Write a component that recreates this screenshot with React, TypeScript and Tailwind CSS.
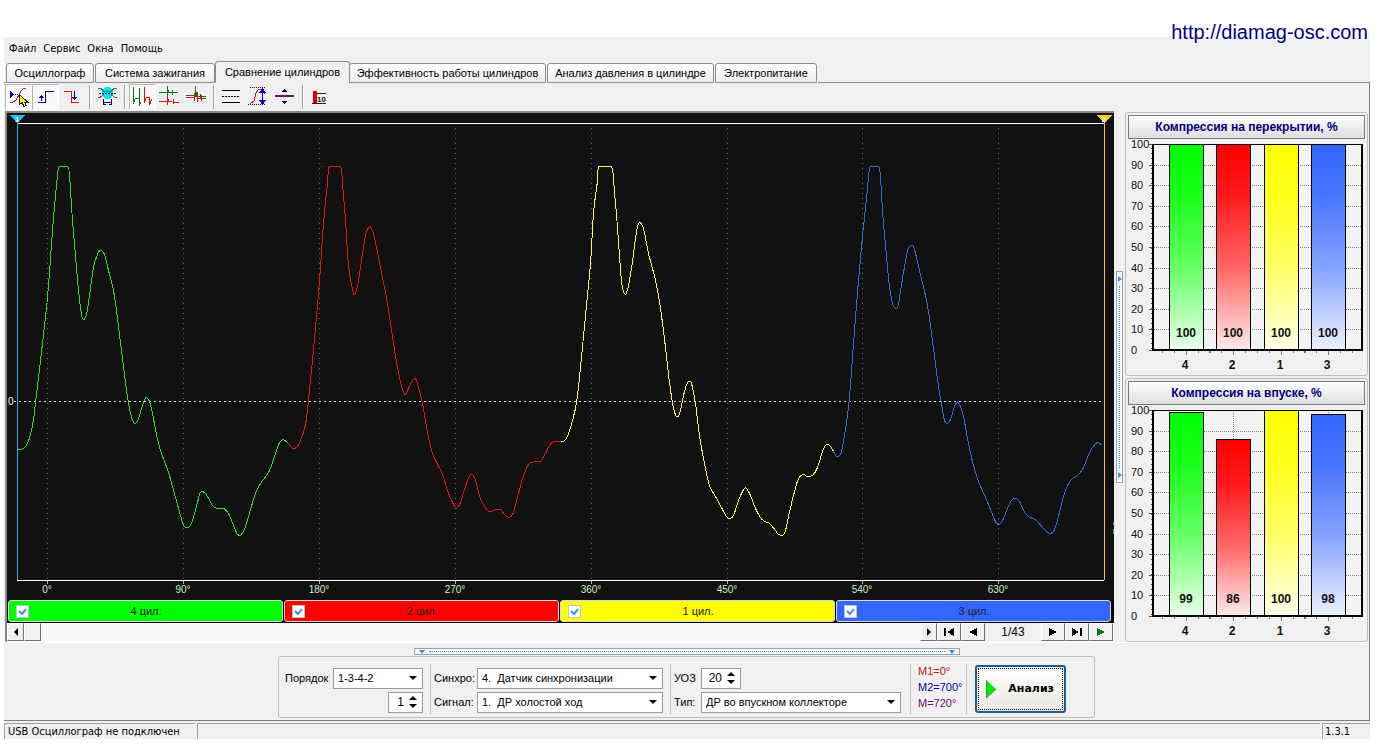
import { useState } from 'react'
import type { ReactNode } from 'react'

type Point = [number, number]

const MENU = ['Файл', 'Сервис', 'Окна', 'Помощь']

const TABS = [
  { label: 'Осциллограф', width: 'w-[88px]' },
  { label: 'Система зажигания', width: 'w-[120px]' },
  { label: 'Сравнение цилиндров', width: 'w-[135px]' },
  { label: 'Эффективность работы цилиндров', width: 'w-[197px]' },
  { label: 'Анализ давления в цилиндре', width: 'w-[167px]' },
  { label: 'Электропитание', width: 'w-[102px]' },
]

const CHANNELS = [
  { name: '4 цил.', bg: 'bg-[#00ff00]' },
  { name: '2 цил.', bg: 'bg-[#ff0000]' },
  { name: '1 цил.', bg: 'bg-[#ffff00]' },
  { name: '3 цил.', bg: 'bg-[#3366ff]' },
]

// pressure curves in chart units, one per cylinder
const CURVES: { color: string; points: Point[] }[] = [
  {
    color: '#2fdc2f',
    points: [[17, 449], [20, 449], [24, 447], [27, 443], [30, 434], [33, 419], [35, 402], [40, 360], [47, 297], [52, 230], [57, 175], [59, 166], [67, 166], [69, 175], [72, 220], [75, 255], [78, 290], [81, 314], [83, 319], [86, 314], [89, 295], [93, 267], [97, 254], [100, 250], [104, 254], [108, 270], [113, 290], [117, 318], [121, 350], [126, 390], [129, 408], [132, 420], [135, 423], [138, 418], [141, 408], [144, 399], [146, 397], [149, 401], [152, 413], [156, 434], [160, 450], [168, 472], [175, 497], [182, 522], [184, 526], [186, 527], [189, 526], [192, 520], [197, 502], [199, 494], [201, 491], [204, 492], [207, 496], [212, 505], [217, 508], [223, 508], [228, 513], [233, 525], [237, 534], [240, 535], [245, 526], [250, 509], [255, 493], [260, 483], [268, 472], [273, 459], [278, 444], [281, 440], [283, 439], [288, 443]],
  },
  {
    color: '#d91a12',
    points: [[288, 443], [292, 448], [294, 448], [297, 446], [300, 440], [305, 424], [308, 400], [312, 360], [317, 305], [320, 267], [323, 223], [327, 183], [329, 166], [340, 166], [342, 183], [345, 220], [348, 265], [352, 289], [354, 294], [357, 285], [361, 260], [365, 235], [367, 229], [369, 226], [371, 228], [374, 237], [380, 267], [387, 303], [392, 336], [397, 367], [402, 389], [405, 394], [408, 388], [412, 380], [415, 378], [418, 387], [422, 403], [427, 432], [432, 453], [437, 464], [442, 474], [447, 490], [452, 502], [456, 508], [460, 502], [463, 492], [467, 480], [471, 473], [475, 480], [480, 498], [486, 509], [490, 511], [495, 509], [500, 509], [505, 515], [509, 517], [513, 512], [518, 493], [523, 475], [528, 464], [531, 462], [534, 461], [540, 461], [545, 453], [549, 445], [553, 441], [560, 441]],
  },
  {
    color: '#f9f650',
    points: [[560, 441], [563, 441], [567, 436], [572, 420], [576, 402], [580, 367], [585, 315], [590, 263], [593, 213], [597, 180], [598, 166], [611, 166], [613, 180], [617, 227], [620, 270], [622, 287], [625, 294], [628, 285], [632, 261], [635, 238], [637, 226], [639, 222], [643, 228], [648, 253], [655, 280], [660, 308], [665, 347], [669, 382], [673, 408], [676, 416], [678, 416], [680, 410], [683, 395], [687, 382], [690, 381], [692, 387], [695, 403], [699, 435], [704, 463], [709, 485], [715, 496], [722, 509], [726, 516], [729, 518], [733, 515], [738, 500], [742, 491], [745, 487], [750, 495], [755, 508], [760, 517], [764, 521], [769, 523], [775, 530], [778, 534], [782, 535], [785, 530], [788, 516], [793, 495], [798, 478], [803, 474], [807, 476], [812, 475], [817, 467], [822, 451], [825, 445], [827, 444], [830, 446], [833, 451]],
  },
  {
    color: '#3768d8',
    points: [[833, 451], [836, 456], [838, 456], [840, 454], [842, 446], [846, 422], [849, 397], [853, 343], [858, 280], [862, 236], [866, 198], [868, 177], [870, 166], [878, 166], [880, 177], [882, 210], [886, 256], [889, 286], [893, 306], [896, 308], [898, 303], [902, 278], [907, 250], [909, 246], [912, 245], [914, 249], [919, 270], [927, 305], [933, 348], [938, 386], [942, 409], [944, 420], [947, 423], [950, 419], [954, 406], [957, 402], [960, 406], [963, 416], [968, 443], [973, 465], [978, 481], [985, 497], [992, 514], [996, 523], [999, 524], [1003, 518], [1007, 508], [1011, 500], [1015, 498], [1019, 501], [1023, 510], [1028, 516], [1036, 520], [1043, 528], [1049, 533], [1052, 532], [1054, 529], [1058, 516], [1063, 496], [1068, 483], [1072, 478], [1077, 475], [1082, 469], [1087, 457], [1092, 447], [1097, 442], [1102, 445]],
  },
]

const ANGLES: { x: number; label: string }[] = [
  { x: 47, label: '0°' },
  { x: 183, label: '90°' },
  { x: 319, label: '180°' },
  { x: 455, label: '270°' },
  { x: 591, label: '360°' },
  { x: 727, label: '450°' },
  { x: 862, label: '540°' },
  { x: 998, label: '630°' },
]

const BAR_COLORS = ['#00ff00', '#ff0000', '#ffff00', '#3366ff']
const BAR_X = [44, 91, 139, 186]
const CYLINDERS = [4, 2, 1, 3]

// spline through the samples, control points clamped so that peaks don't overshoot
function smoothPath(points: Point[]) {
  const clamp = (v: number, a: number, b: number) => Math.max(Math.min(a, b), Math.min(Math.max(a, b), v))
  let d = `M${points[0][0] + 0.5} ${points[0][1] + 0.5}`
  for (let i = 0; i < points.length - 1; i++) {
    const [x0, y0] = points[i - 1] ?? points[i]
    const [x1, y1] = points[i]
    const [x2, y2] = points[i + 1]
    const [x3, y3] = points[i + 2] ?? points[i + 1]
    const c1 = [clamp(x1 + (x2 - x0) / 6, x1, x2), clamp(y1 + (y2 - y0) / 6, y1, y2)]
    const c2 = [clamp(x2 - (x3 - x1) / 6, x1, x2), clamp(y2 - (y3 - y1) / 6, y1, y2)]
    d += `C${c1[0] + 0.5} ${c1[1] + 0.5} ${c2[0] + 0.5} ${c2[1] + 0.5} ${x2 + 0.5} ${y2 + 0.5}`
  }
  return d
}

function Oscillogram() {
  return (
    <svg viewBox="7 113 1107 487" className="block w-full bg-[#111111]" shapeRendering="crispEdges" role="img" aria-label="Осциллограмма давления">
      {ANGLES.map(a => (
        <g key={a.x}>
          <line x1={a.x + 0.5} x2={a.x + 0.5} y1="128" y2="580" stroke="#666" strokeDasharray="1 4" />
          <line x1={a.x + 0.5} x2={a.x + 0.5} y1="581" y2="584" stroke="#bbb" />
          <text x={a.x} y="593" textAnchor="middle" fontSize="10" fill="#c9f2c4">{a.label}</text>
        </g>
      ))}
      <line x1="14" x2="1104" y1="401.5" y2="401.5" stroke="#ddd" strokeDasharray="2 3" />
      <text x="8" y="405" fontSize="10" fill="#f4f4e0">0</text>
      {CURVES.map(c => <path key={c.color} d={smoothPath(c.points)} fill="none" stroke={c.color} />)}
      <path d="M17 123.5H1104M17 580.5H1104" stroke="#fff" />
      <path d="M17.5 115V580" stroke="#20b4f0" />
      <path d="M1104.5 115V580" stroke="#f5c723" />
      <path d="M10 115H25L17.5 123Z" fill="#1cbdf2" />
      <path d="M1097 115H1112L1104.5 123Z" fill="#fcc81c" />
      <text x="17" y="122" textAnchor="middle" fontSize="8" fontWeight="bold" fill="#fff">1</text>
      <text x="1104" y="122" textAnchor="middle" fontSize="8" fontWeight="bold" fill="#fff">2</text>
      <path d="M1113 522v3" stroke="#3366ff" />
      <path d="M1113 529v5" stroke="#00cc00" />
    </svg>
  )
}

function BarPanel({ title, values }: { title: string; values: number[] }) {
  return (
    <section className="h-[264px] rounded-[3px] border border-[#bdbdbd] p-0.5">
      <button className="flex h-6 w-full items-center justify-center border border-[#7a7a7a] bg-linear-to-b from-white to-[#dddddd] text-[12px] font-bold text-[#00007c]">{title}</button>
      <svg viewBox="0 0 237 235" className="block w-full" shapeRendering="crispEdges" role="img" aria-label={title}>
        <defs>
          {BAR_COLORS.map((color, i) => (
            <linearGradient key={color} id={`bar-${i}`} x1="0" x2="0" y1="0" y2="1">
              <stop offset="0" stopColor={color} />
              <stop offset="0.25" stopColor={color} stopOpacity="0.9" />
              <stop offset="0.6" stopColor={color} stopOpacity="0.6" />
              <stop offset="1" stopColor={color} stopOpacity="0.08" />
            </linearGradient>
          ))}
        </defs>
        <rect x="25" y="5" width="209" height="206" fill="#f3f3f3" />
        {Array.from({ length: 11 }, (_, i) => {
          const y = Math.round(211 - i * 20.6)
          return (
            <g key={i}>
              <line x1="21" x2="24" y1={y + 0.5} y2={y + 0.5} stroke="#555" />
              {i > 0 && <line x1="26" x2="234" y1={y + 0.5} y2={y + 0.5} stroke="#888" strokeDasharray="1 1" />}
              <text x="3" y={y + 4} fontSize="11" fill="#111">{i * 10}</text>
            </g>
          )
        })}
        <line x1="23.5" x2="23.5" y1="9" y2="211" stroke="#555" strokeDasharray="1 4" />
        {values.map((v, i) => {
          const height = Math.round(v * 2.06)
          const x = BAR_X[i]
          return (
            <g key={i}>
              <line x1={x + 14.5} x2={x + 14.5} y1="5" y2="211" stroke="#888" strokeDasharray="1 1" />
              <rect x={x - 2.5} y={211.5 - height} width="34" height={height} fill="#fff" />
              <rect x={x - 2.5} y={211.5 - height} width="34" height={height} fill={`url(#bar-${i})`} stroke="#000" />
              <text x={x + 14} y="198" textAnchor="middle" fontSize="12" fontWeight="bold" fill="#111">{v}</text>
              <path d={`M${x + 14.5} 212v4M${x + 2.5} 212v2M${x + 26.5} 212v2M${x - 9.5} 212v2M${x + 38.5} 212v2`} stroke="#777" />
              <text x={x + 13} y="230" textAnchor="middle" fontSize="12" fontWeight="bold" fill="#111">{CYLINDERS[i]}</text>
            </g>
          )
        })}
        <path d="M24 5.5H235" stroke="#000" />
        <path d="M25 5V212M234 5V212M24 211H235" stroke="#000" strokeWidth="2" />
      </svg>
    </section>
  )
}

function ToolButton({ label, pressed, children }: { label: string; pressed?: boolean; children: ReactNode }) {
  return (
    <button aria-label={label} aria-pressed={pressed} className={pressed ? 'h-[26px] w-[27px] border border-t-[#b4b4b4] border-l-[#b4b4b4] border-r-white border-b-white bg-[#f8f8f8]' : 'h-[26px] w-[27px] border border-transparent'}>
      <svg viewBox="1 1 25 24" className="block h-6 w-[25px]" fill="none" shapeRendering="crispEdges">{children}</svg>
    </button>
  )
}

function ToolSeparator() {
  return <span className="mx-[3px] h-6 w-0.5 border-l border-[#a0a0a0] bg-white" />
}

function Toolbar() {
  return (
    <div className="flex h-7 items-center pl-px">
      <ToolButton label="Маркеры" pressed>
        <path d="M5 7V14L9 10.5Z" fill="#0000c8" />
        <path d="M10 10.5H16" stroke="#0000c8" strokeDasharray="1 1" />
        <path d="M5 18H8L11 16L14 11L16 7L19 4H21" stroke="#d01010" />
        <path d="M14.5 10.5V20.5L17 18.5L19 22.5L21 21.5L19.5 18H22.5Z" fill="#ffff00" stroke="#222" />
      </ToolButton>
      <ToolButton label="Фронт вверх" pressed>
        <path d="M6 18.5H13.5V7.5H22" stroke="#000090" />
        <path d="M9.5 17V11M7 13.5H12M8 12.5H11" stroke="#000090" />
      </ToolButton>
      <ToolButton label="Фронт вниз">
        <path d="M5 7.5H12.5V18.5H20" stroke="#e01010" />
        <path d="M15.5 7V16M13 13.5H18M14 14.5H17" stroke="#000090" />
      </ToolButton>
      <ToolSeparator />
      <ToolButton label="Диапазон">
        <circle cx="13.5" cy="9" r="6" fill="#00e8f0" />
        <path d="M4 4.5H7L10 7.5H17L20 4.5H23" stroke="#158080" />
        <path d="M4 13.5H6L10 10.5M17 10.5L21 13.5H23" stroke="#b03030" />
        <path d="M5 9.5H23" stroke="#222" strokeDasharray="2 1" />
        <path d="M9.5 15V21M17.5 15V21M10 18.5H17M9 20.5H12M15 20.5H18" stroke="#0000a0" />
      </ToolButton>
      <ToolSeparator />
      <ToolButton label="Рядом" pressed>
        <path d="M4.5 3V20M5.5 18V15M6 14.5H11M10.5 4V22M11.5 20V18" stroke="#087808" />
        <path d="M15.5 3V19M16.5 17V14M17 13.5H21M20.5 13V21M21.5 20V17M22.5 17V15" stroke="#e01010" />
      </ToolButton>
      <ToolButton label="Друг под другом">
        <path d="M3 8.5H11M11.5 2V13M12.5 6V9M12 8.5H22M16.5 6V11" stroke="#087808" />
        <path d="M3 17.5H11M11.5 12V21M12.5 15V18M12 17.5H16M17.5 15V20M17 18.5H23" stroke="#e01010" />
      </ToolButton>
      <ToolButton label="Наложение">
        <path d="M3 11.5H12M12.5 2V13M13.5 8V13M13 12.5H23M17.5 10V14" stroke="#087808" />
        <path d="M3 13.5H12M11.5 9V17M14.5 8V18M14 14.5H23M18.5 11V17" stroke="#e01010" />
      </ToolButton>
      <ToolSeparator />
      <ToolButton label="Линии">
        <path d="M4 6.5H22M4 18.5H22" stroke="#000" />
        <path d="M4 12.5H22" stroke="#000" strokeDasharray="2 1" />
      </ToolButton>
      <ToolButton label="Амплитуда">
        <path d="M5 3.5H20M3 20.5H20" stroke="#111" strokeDasharray="1 1" />
        <path d="M5 20L9 17L11 9L14 5H18L20 10" stroke="#e01010" />
        <path d="M17.5 6V19" stroke="#0000e0" />
        <path d="M14 9L17.5 4L21 9ZM14 16L17.5 21L21 16Z" fill="#0000e0" />
      </ToolButton>
      <ToolButton label="Середина">
        <path d="M3 12H22" stroke="#800080" strokeWidth="2" />
        <path d="M9 8L12 5L15 8ZM9 17L12 20L15 17Z" fill="#000" />
      </ToolButton>
      <ToolSeparator />
      <ToolButton label="Таблица значений">
        <path d="M6 7H10V19H6Z" fill="#e00000" />
        <path d="M5 19.5H19M10 9.5H19" stroke="#222" />
        <text x="10" y="18" fontSize="8" fontWeight="bold" fill="#111">10</text>
      </ToolButton>
    </div>
  )
}

function NavButton({ label, children }: { label: string; children: ReactNode }) {
  return (
    <button aria-label={label} className="flex h-[18px] w-6 items-center justify-center border border-t-white border-l-white border-r-[#707070] border-b-[#707070] bg-[#f0f0f0]">
      <svg viewBox="0 0 12 10" className="h-2.5 w-3 text-black" fill="currentColor" shapeRendering="crispEdges">{children}</svg>
    </button>
  )
}

function ChannelBar() {
  const [enabled, setEnabled] = useState([true, true, true, true])
  const toggle = (index: number) => setEnabled(enabled.map((on, i) => (i === index ? !on : on)))

  return (
    <div className="flex gap-px bg-black pr-[3px] pb-px pl-px">
      {CHANNELS.map((c, i) => (
        <label key={c.name} className={`relative flex h-[22px] flex-1 items-center rounded-[3px] border border-[#d8d8d8] px-[7px] ${c.bg}`}>
          <input type="checkbox" checked={enabled[i]} onChange={() => toggle(i)} className="peer h-[13px] w-[13px] appearance-none border border-[#b8c4cc] bg-white" />
          <svg viewBox="0 0 13 13" className="pointer-events-none absolute left-[7px] hidden h-[13px] w-[13px] peer-checked:block" fill="none" stroke="#3a8ee0" strokeWidth="2"><path d="M3 6L6 9L10 4" /></svg>
          <span className="flex-1 pr-3 text-center text-[11px] text-[#222]">{c.name}</span>
        </label>
      ))}
    </div>
  )
}

function ScrollRow() {
  return (
    <div className="flex h-[19px] items-start bg-[#f8f8f8] pr-px">
      <button aria-label="Назад" className="flex h-[18px] w-[17px] items-center justify-center border border-t-white border-l-white border-r-[#707070] border-b-[#707070] bg-[#f0f0f0]">
        <svg viewBox="0 0 4 8" className="h-2 w-1"><path d="M4 0V8L0 4Z" /></svg>
      </button>
      <button aria-label="Ползунок" className="h-[18px] w-[17px] border border-t-white border-l-white border-r-[#707070] border-b-[#707070] bg-[#f0f0f0]" />
      <div className="flex-1" />
      <button aria-label="Вперёд" className="flex h-[18px] w-[17px] items-center justify-center border border-t-white border-l-white border-r-[#707070] border-b-[#707070] bg-[#f0f0f0]">
        <svg viewBox="0 0 4 8" className="h-2 w-1"><path d="M0 0V8L4 4Z" /></svg>
      </button>
      <NavButton label="В начало"><path d="M1 1H3V9H1ZM11 1V9L4 5Z" /></NavButton>
      <NavButton label="Предыдущий"><path d="M10 1V9L2 5Z" /></NavButton>
      <span className="flex h-[18px] w-14 items-center justify-center bg-[#f0f0f0] text-[12px]">1/43</span>
      <NavButton label="Следующий"><path d="M2 1V9L10 5Z" /></NavButton>
      <NavButton label="В конец"><path d="M1 1V9L8 5ZM9 1H11V9H9Z" /></NavButton>
      <NavButton label="Воспроизвести"><path d="M2 1V9L10 5Z" fill="#087808" /></NavButton>
    </div>
  )
}

function Combo({ id, value, width }: { id: string; value: string; width: string }) {
  return (
    <div className={`relative ${width}`}>
      <select id={id} defaultValue={value} className="block h-[21px] w-full appearance-none border border-[#9a9a9a] bg-white pr-4 pl-1 text-[11px]">
        <option>{value}</option>
      </select>
      <svg viewBox="0 0 8 4" className="pointer-events-none absolute top-2 right-1.5 h-1 w-2"><path d="M0 0H8L4 4Z" /></svg>
    </div>
  )
}

function Spin({ id, label, value, width }: { id: string; label: string; value: string; width: string }) {
  return (
    <div className={`relative ${width}`}>
      <input id={id} aria-label={label} defaultValue={value} className="block h-[21px] w-full border border-[#9a9a9a] bg-white pr-[18px] text-right text-[12px]" />
      <svg viewBox="0 0 8 12" className="pointer-events-none absolute top-1 right-1.5 h-3 w-2"><path d="M0 4H8L4 0ZM0 8H8L4 12Z" /></svg>
    </div>
  )
}

function Divider() {
  return <span className="h-[50px] w-px bg-[#bdbdbd]" />
}

function SettingsPanel() {
  return (
    <div className="mx-auto flex h-[62px] w-[817px] items-center rounded-[3px] border border-[#bdbdbd] pt-1 pl-1.5">
      <div className="flex w-[145px] flex-col items-end gap-[3px] pt-0.5 pr-[7px]">
        <div className="flex w-full items-center justify-between">
          <label htmlFor="order">Порядок</label>
          <Combo id="order" value="1-3-4-2" width="w-[90px]" />
        </div>
        <Spin id="first" label="Первый цилиндр" value="1" width="w-[35px]" />
      </div>
      <Divider />
      <div className="grid w-[239px] grid-cols-[43px_186px] items-center gap-y-[3px] pt-0.5 pl-[3px]">
        <label htmlFor="sync">Синхро:</label>
        <Combo id="sync" value={'4.\u00a0 Датчик синхронизации'} width="w-full" />
        <label htmlFor="signal">Сигнал:</label>
        <Combo id="signal" value={'1.\u00a0 ДР холостой ход'} width="w-full" />
      </div>
      <Divider />
      <div className="grid w-[239px] grid-cols-[27px_200px] items-center gap-y-[3px] pt-0.5 pl-[3px]">
        <label htmlFor="advance">УОЗ</label>
        <Spin id="advance" label="УОЗ" value="20" width="w-10" />
        <label htmlFor="sensor">Тип:</label>
        <Combo id="sensor" value="ДР во впускном коллекторе" width="w-full" />
      </div>
      <Divider />
      <div className="w-[55px] pb-1 pl-[7px] text-[11px] leading-4">
        <div className="text-[#c81414]">M1=0°</div>
        <div className="text-[#0000a8]">M2=700°</div>
        <div className="text-[#780078]">M=720°</div>
      </div>
      <Divider />
      <button className="ml-2 flex h-12 w-[91px] items-center rounded-[3px] border-2 border-[#1c5c94] bg-linear-to-b from-white to-[#e8e8e0] p-px">
        <span className="flex h-full w-full items-center justify-between border border-dotted border-black pr-2 pl-[7px] font-['DejaVu_Sans',sans-serif] text-[11px] font-bold">
          <svg viewBox="0 0 10 18" className="h-[18px] w-2.5"><path d="M0 0V18L10 9Z" fill="#00f000" /><path d="M0.5 0V18L10 9" fill="none" stroke="#508050" /></svg>
          Анализ
        </span>
      </button>
    </div>
  )
}

export default function App() {
  const [activeTab, setActiveTab] = useState(2)

  return (
    <div className="min-h-screen bg-white pr-3 pl-1 font-['Liberation_Sans',Arial,sans-serif] text-[11px] text-black">
      <header className="flex h-[37px] justify-end pr-0.5">
        <a href="http://diamag-osc.com" className="relative z-10 pt-[18px] text-[20px] leading-7 text-[#000080]">http://diamag-osc.com</a>
      </header>

      <div className="bg-[#f0f0f0]">
        <nav className="flex h-6 items-center gap-[7px] pt-px pl-[5px] font-['DejaVu_Sans_Condensed','DejaVu_Sans',sans-serif]">
          {MENU.map(item => <button key={item}>{item}</button>)}
        </nav>

        <div role="tablist" className="flex items-end">
          <span className="w-0.5 self-stretch border-b border-[#8c8c8c]" />
          {TABS.map((tab, i) => (
            <button
              key={tab.label}
              role="tab"
              aria-selected={i === activeTab}
              onClick={() => setActiveTab(i)}
              className={`shrink-0 rounded-t-[3px] border border-[#8c8c8c] text-[11px] whitespace-nowrap ${tab.width} ${i === activeTab ? '-mr-px -ml-px h-[22px] border-b-transparent bg-[#f0f0f0]' : 'mr-px h-5 bg-linear-to-b from-white to-[#ececec]'}`}
            >
              {tab.label}
            </button>
          ))}
          <span className="flex-1 self-stretch border-b border-[#8c8c8c]" />
        </div>

        <div className="border-r border-b border-[#808080] pb-0.5">
          <Toolbar />

          <main className="flex">
            <div className="ml-px min-w-0 flex-1 border-t-2 border-l-2 border-[#8a8a8a]">
              <Oscillogram />
              <ChannelBar />
              <ScrollRow />
            </div>
            <div className="flex w-[11px] items-center justify-center">
              <button aria-label="Скрыть диаграммы" className="flex h-[212px] w-[7px] flex-col items-center border border-[#a0a0a0] bg-[#f2f8fd] py-1">
                <svg viewBox="0 0 4 6" className="h-1.5 w-1 shrink-0" fill="#3a94e4"><path d="M0 0V6L4 3Z" /></svg>
                <span className="my-1 w-0 flex-1 border-l border-dotted border-[#3a94e4]" />
                <svg viewBox="0 0 4 6" className="h-1.5 w-1 shrink-0" fill="#3a94e4"><path d="M0 0V6L4 3Z" /></svg>
              </button>
            </div>
            <aside className="flex w-[244px] flex-col gap-0.5 pt-px pr-px">
              <BarPanel title="Компрессия на перекрытии, %" values={[100, 100, 100, 100]} />
              <BarPanel title="Компрессия на впуске, %" values={[99, 86, 100, 98]} />
            </aside>
          </main>

          <div className="flex justify-center border-t border-white pt-[5px]">
            <button aria-label="Скрыть настройки" className="flex h-[7px] w-[546px] items-center border border-[#a0a0a0] bg-[#f2f8fd] px-1">
              <svg viewBox="0 0 6 4" className="h-1 w-1.5 shrink-0" fill="#3a94e4"><path d="M0 0H6L3 4Z" /></svg>
              <span className="mx-1 h-0 flex-1 border-t border-dotted border-[#3a94e4]" />
              <svg viewBox="0 0 6 4" className="h-1 w-1.5 shrink-0" fill="#3a94e4"><path d="M0 0H6L3 4Z" /></svg>
            </button>
          </div>
          <div className="pt-px">
            <SettingsPanel />
          </div>
        </div>

        <footer className="flex gap-0.5 pt-0.5 font-['DejaVu_Sans_Condensed','DejaVu_Sans',sans-serif]">
          <span className="h-4 w-[191px] border-t border-l border-[#a0a0a0] pl-[3px] leading-4">USB Осциллограф не подключен</span>
          <span className="h-4 flex-1 border-t border-l border-[#a0a0a0]" />
          <span className="h-4 w-12 border-t border-l border-[#a0a0a0] pl-0.5 leading-4">1.3.1</span>
        </footer>
      </div>
    </div>
  )
}
